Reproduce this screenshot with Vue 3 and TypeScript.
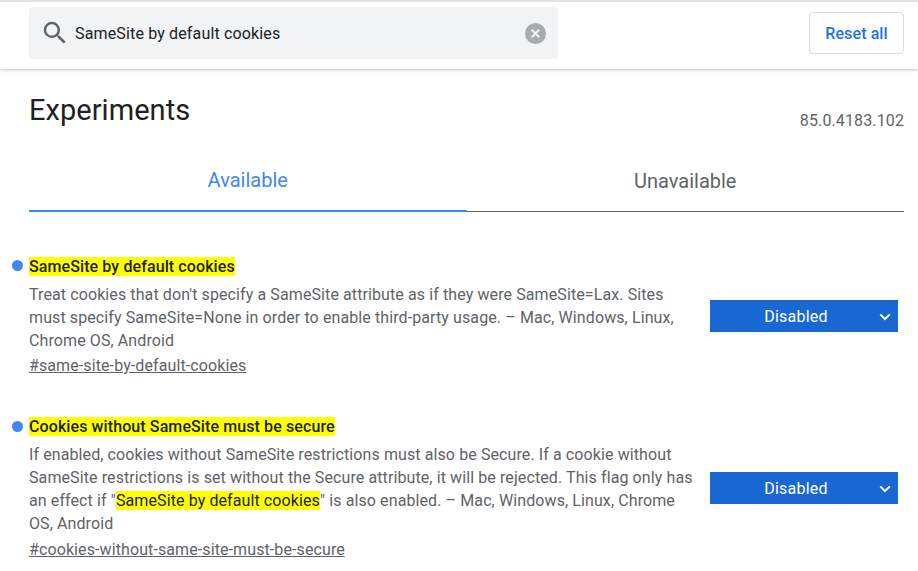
<script setup lang="ts">
interface Part { text: string; mark?: boolean }
interface Experiment { id: string; title: string; parts: Part[]; link: string }
const experiments: Experiment[] = [
  {
    id: 'a',
    title: 'SameSite by default cookies',
    parts: [{ text: "Treat cookies that don't specify a SameSite attribute as if they were SameSite=Lax. Sites must specify SameSite=None in order to enable third-party usage. – Mac, Windows, Linux, Chrome OS, Android" }],
    link: '#same-site-by-default-cookies',
  },
  {
    id: 'b',
    title: 'Cookies without SameSite must be secure',
    parts: [
      { text: 'If enabled, cookies without SameSite restrictions must also be Secure. If a cookie without SameSite restrictions is set without the Secure attribute, it will be rejected. This flag only has an effect if "' },
      { text: 'SameSite by default cookies', mark: true },
      { text: '" is also enabled. – Mac, Windows, Linux, Chrome OS, Android' },
    ],
    link: '#cookies-without-same-site-must-be-secure',
  },
]
</script>

<template>
  <div class="page">
    <header class="header">
      <div class="search">
        <svg class="search-icon" width="30" height="30" viewBox="0 0 24 24">
          <path fill="#5f6368" d="M15.5 14h-.79l-.28-.27A6.47 6.47 0 0 0 16 9.5 6.5 6.5 0 1 0 9.5 16c1.61 0 3.09-.59 4.23-1.57l.27.28v.79l5 4.99L20.49 19l-4.99-5zm-6 0C7.01 14 5 11.99 5 9.5S7.01 5 9.5 5 14 7.01 14 9.5 11.99 14 9.5 14z" />
        </svg>
        <span class="search-text">SameSite by default cookies</span>
        <svg class="clear" width="21" height="21" viewBox="0 0 21 21">
          <circle cx="10.5" cy="10.5" r="10.5" fill="#a8abad" />
          <path d="M6.8 6.8l7.4 7.4M14.2 6.8l-7.4 7.4" stroke="#f1f3f4" stroke-width="2" />
        </svg>
      </div>
      <button class="reset">Reset all</button>
    </header>

    <main class="content">
      <div class="title-row">
        <h1>Experiments</h1>
        <span class="version">85.0.4183.102</span>
      </div>
      <div class="tabs">
        <div class="tab active">Available</div>
        <div class="tab">Unavailable</div>
      </div>
      <section v-for="e in experiments" :key="e.id" class="experiment">
        <div class="info">
          <h2><mark>{{ e.title }}</mark></h2>
          <p><template v-for="(p, i) in e.parts" :key="i"><mark v-if="p.mark">{{ p.text }}</mark><template v-else>{{ p.text }}</template></template></p>
          <a class="link">{{ e.link }}</a>
        </div>
        <div class="select">
          <span>Disabled</span>
          <svg class="chev" width="12" height="8" viewBox="0 0 12 8">
            <path d="M1.2 1.4L6 6l4.8-4.6" fill="none" stroke="#fff" stroke-width="2" />
          </svg>
        </div>
      </section>
    </main>
  </div>
</template>

<style>
html, body { margin: 0; background: #fff; overflow: hidden; }
</style>

<style scoped>
.page {
  width: 918px;
  height: 571px;
  overflow: hidden;
  font-family: Roboto, "Liberation Sans", sans-serif;
  color: #5f6368;
  background: #fff;
}
.header {
  display: flex;
  align-items: center;
  justify-content: space-between;
  box-sizing: border-box;
  height: 69px;
  padding: 0 14px 5px 29px;
  border-top: 2px solid #e3e3e3;
  box-shadow: 0 1px 3px rgba(60, 64, 67, 0.3);
}
.search {
  display: flex;
  align-items: center;
  box-sizing: border-box;
  width: 529px;
  height: 52px;
  padding: 0 12px 0 11px;
  background: #f1f3f4;
  border-radius: 4px;
}
.search-text {
  flex: 1;
  margin-left: 5px;
  font-size: 16px;
  letter-spacing: 0.15px;
  color: #202124;
}
.reset {
  box-sizing: border-box;
  width: 95px;
  height: 42px;
  padding: 0;
  background: #fff;
  border: 1px solid #dadce0;
  border-radius: 4px;
  color: #1a73e8;
  font: 500 16px Roboto, sans-serif;
  letter-spacing: 0.1px;
}
.content { padding: 0 14px 0 29px; }
.title-row {
  display: flex;
  justify-content: space-between;
  padding-top: 24px;
}
h1 {
  margin: 0;
  font-size: 29px;
  font-weight: 400;
  line-height: 34px;
  letter-spacing: 0.05px;
  color: #202124;
}
.version {
  margin-top: 18px;
  font-size: 16px;
  line-height: 20px;
  letter-spacing: 0.12px;
}
.tabs {
  display: flex;
  margin-top: 22px;
  height: 59px;
}
.tab {
  flex: 1;
  box-sizing: border-box;
  padding-top: 16px;
  text-align: center;
  font-size: 20px;
  line-height: 24px;
  border-bottom: 1px solid #5f6368;
}
.tab.active {
  padding-top: 15px;
  color: #4285f4;
  border-bottom: 2px solid #4285f4;
}
.experiment {
  position: relative;
  display: flex;
  align-items: center;
  justify-content: space-between;
  margin-right: 6px;
}
.experiment:first-of-type { margin-top: 43px; }
.experiment + .experiment { margin-top: 38px; }
.experiment + .experiment .link { margin-top: 3px; }
.experiment::before {
  content: "";
  position: absolute;
  left: -17px;
  top: 5px;
  width: 11px;
  height: 11px;
  border-radius: 50%;
  background: #4285f4;
}
.experiment + .experiment::before { top: 6px; }
.info { width: 665px; }
h2 {
  margin: 0;
  font-size: 16px;
  font-weight: 500;
  line-height: 23px;
  letter-spacing: 0.1px;
  color: #202124;
}
mark { background: #ff0; color: inherit; padding: 0; }
p {
  margin: 5px 0 0;
  font-size: 16px;
  line-height: 23px;
  letter-spacing: 0.1px;
}
p mark { color: #202124; }
.link {
  display: block;
  margin-top: 2px;
  font-size: 16px;
  line-height: 23px;
  letter-spacing: 0.1px;
  text-decoration: underline;
}
.select {
  position: relative;
  flex: none;
  display: flex;
  align-items: center;
  justify-content: center;
  box-sizing: border-box;
  width: 188px;
  height: 32px;
  padding-right: 16px;
  background: #1967d2;
  color: #fff;
  font-size: 16px;
  letter-spacing: 0.2px;
}
.chev {
  position: absolute;
  right: 7px;
  top: 13px;
}
</style>
